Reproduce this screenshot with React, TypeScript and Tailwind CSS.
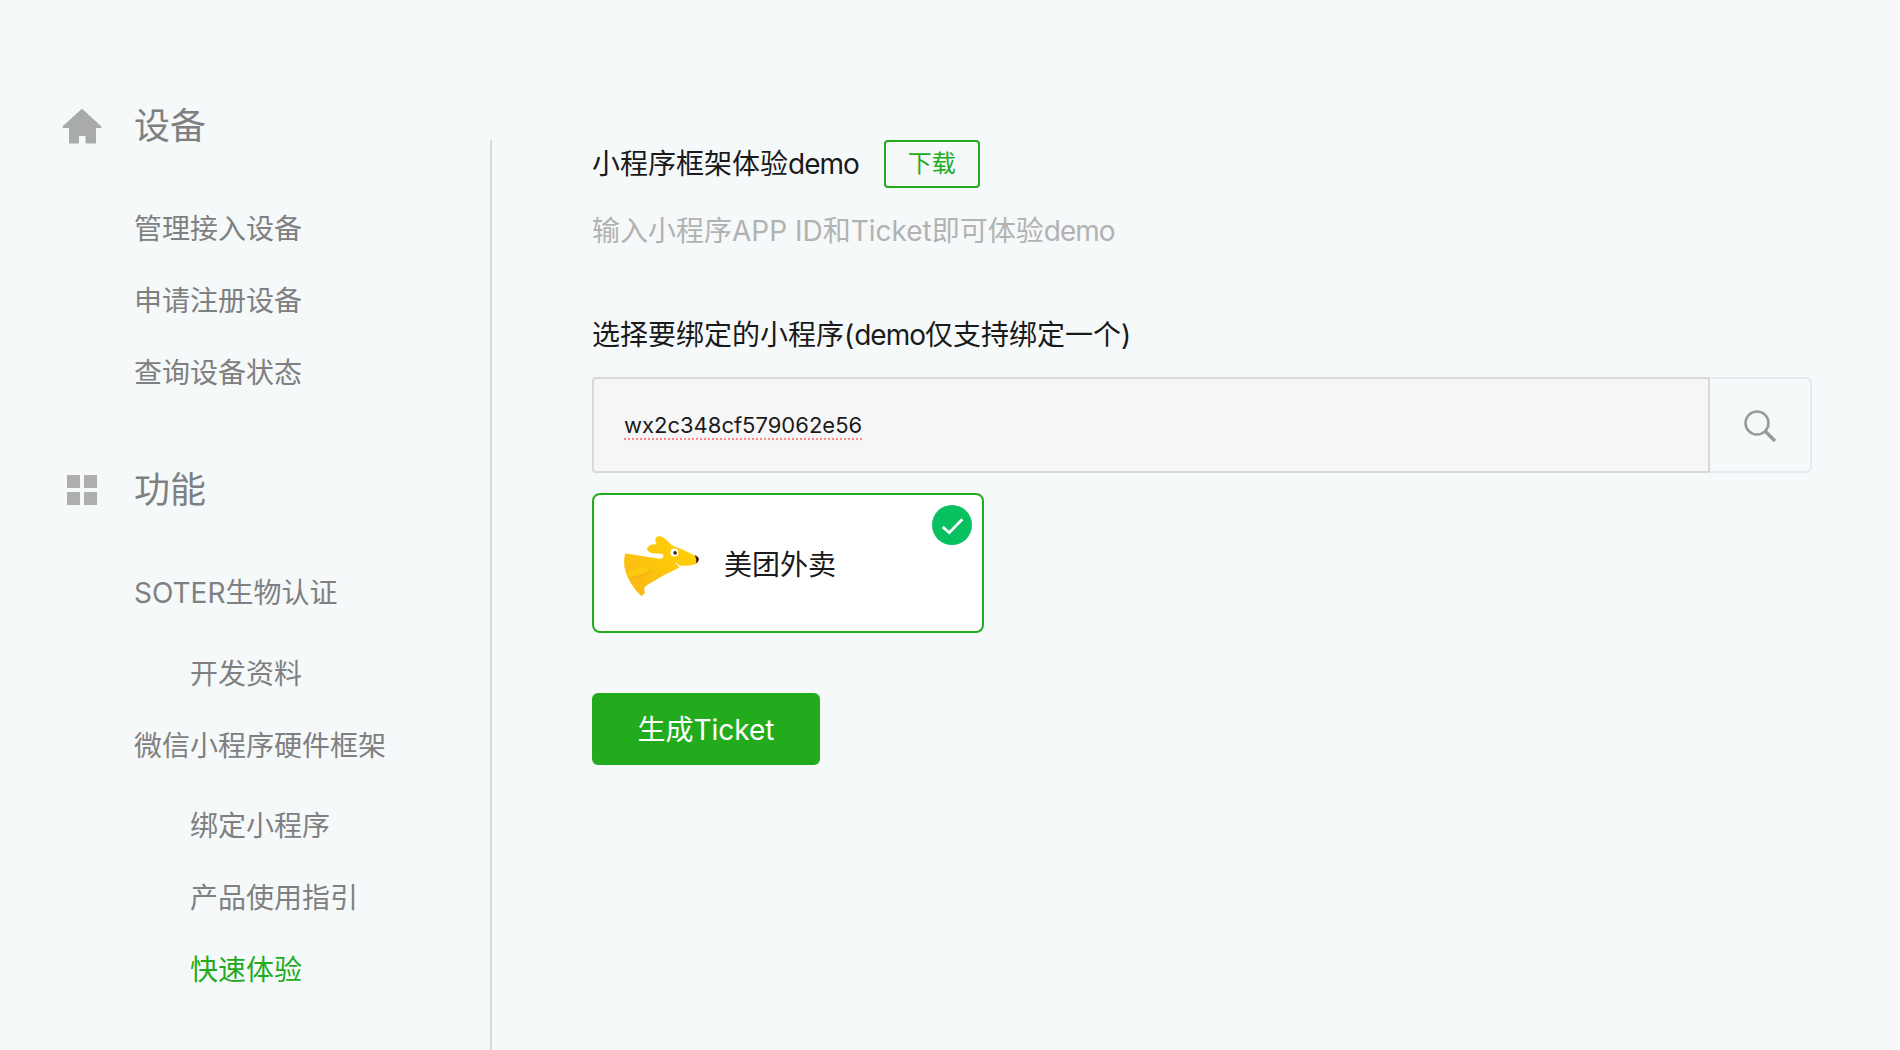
import React from "react";

const fontStack = "font-['Inter','Noto_Sans_CJK_SC',sans-serif]";

function HomeIcon() {
  return (
    <svg width="40" height="36" viewBox="0 0 40 36" className="shrink-0">
      <path
        d="M20 2 L38.5 19 L33 19 L33 34.5 L24.5 34.5 L24.5 27 L16 27 L16 34.5 L8 34.5 L8 19 L1.5 19 Z"
        fill="#a9aaac"
        stroke="#a9aaac"
        strokeWidth="2"
        strokeLinejoin="round"
      />
    </svg>
  );
}

function GridIcon() {
  return (
    <div className="w-[40px] shrink-0 flex justify-center">
      <div className="grid grid-cols-[13px_13px] grid-rows-[13px_13px] gap-[4px]">
        <div className="bg-[#aeaeae]" />
        <div className="bg-[#aeaeae]" />
        <div className="bg-[#aeaeae]" />
        <div className="bg-[#aeaeae]" />
      </div>
    </div>
  );
}

function SearchIcon() {
  return (
    <svg width="36" height="36" viewBox="0 0 36 36" fill="none">
      <circle cx="15" cy="15" r="11.5" stroke="#999999" strokeWidth="2.5" />
      <path d="M23.5 23.5 L33 33" stroke="#999999" strokeWidth="3.5" />
    </svg>
  );
}

function MeituanLogo() {
  return (
    <svg width="77" height="63" viewBox="70 45 230 190" className="shrink-0 mt-[3px]">
      <defs>
        <linearGradient id="dogBody" x1="0" y1="1" x2="1" y2="0">
          <stop offset="0" stopColor="#fbb516" />
          <stop offset="1" stopColor="#ffd502" />
        </linearGradient>
      </defs>
      <path
        d="M75 100 L178 117 Q194 116 190 104 Q180 100 157 100 Q139 96 142 83 Q150 72 170 73 Q160 56 175 48 Q192 48 216 76 Q250 88 285 107 L297 117 Q296 131 285 134 Q262 140 240 137 Q231 132 226 125 Q228 135 240 142 Q190 165 142 196 Q128 205 135 219 L125 230 Q82 190 73 140 Q71 118 75 100 Z"
        fill="url(#dogBody)"
      />
      <path d="M80 157 Q92 146 148 137 Q150 150 130 160 Q105 172 92 172 Q80 170 80 157 Z" fill="#fdc811" />
      <path d="M92 172 Q130 168 165 150 Q135 172 100 178 Z" fill="#f6ae1c" />
      <circle cx="224" cy="98" r="12" fill="#ffffff" />
      <circle cx="226" cy="99" r="5.5" fill="#3a2a1a" />
      <path d="M285 105 Q298 110 298 118 Q296 128 290 130 Q291 116 285 105 Z" fill="#3f2410" />
    </svg>
  );
}

function CheckBadge() {
  return (
    <svg width="40" height="40" viewBox="0 0 40 40" className="absolute top-[10px] right-[10px]">
      <circle cx="20" cy="20" r="20" fill="#07c160" />
      <path d="M10.7 22 L17.3 27.7 L30.3 14.3" fill="none" stroke="#ffffff" strokeWidth="2.8" />
    </svg>
  );
}

function Demo() {
  return <span className="tracking-[-1px]">demo</span>;
}

function NavItem({ label, sub = false, active = false }: { label: string; sub?: boolean; active?: boolean }) {
  return (
    <div
      className={
        "h-[72px] leading-[72px] text-[28px] whitespace-nowrap " +
        (sub ? "pl-[190px] " : "pl-[134px] ") +
        (active ? "text-[#22ac1d]" : "text-[#7f8081]")
      }
    >
      {label}
    </div>
  );
}

function NavHeading({ icon, label }: { icon: React.ReactNode; label: string }) {
  return (
    <div className="flex items-center gap-[32px] pl-[62px] h-[50px]">
      {icon}
      <span className="text-[36px] leading-[50px] text-[#7f8081]">{label}</span>
    </div>
  );
}

export default function App() {
  return (
    <div className={"flex w-[1900px] h-[1050px] overflow-hidden bg-[#f6f9fa] " + fontStack}>
      <nav className="w-[490px] shrink-0 pt-[101px]">
        <NavHeading icon={<HomeIcon />} label="设备" />
        <div className="mt-[42px]">
          <NavItem label="管理接入设备" />
          <NavItem label="申请注册设备" />
          <NavItem label="查询设备状态" />
        </div>
        <div className="mt-[56px]">
          <NavHeading icon={<GridIcon />} label="功能" />
        </div>
        <div className="mt-[42px]">
          <NavItem label="SOTER生物认证" />
          <div className="mt-[9px]">
            <NavItem label="开发资料" sub />
          </div>
          <NavItem label="微信小程序硬件框架" />
          <div className="mt-[8px]">
            <NavItem label="绑定小程序" sub />
            <NavItem label="产品使用指引" sub />
            <NavItem label="快速体验" sub active />
          </div>
        </div>
      </nav>

      <main className="flex-1 mt-[140px] border-l-2 border-[#d8d9da] pl-[100px]">
        <div className="flex items-center gap-[25px]">
          <h2 className="text-[28px] leading-[47px] font-normal text-[#1a1a1a]">
            小程序框架体验
            <Demo />
          </h2>
          <a className="w-[96px] h-[48px] border-2 border-[#22ac1d] rounded-[4px] flex items-center justify-center text-[24px] text-[#22ac1d]">
            下载
          </a>
        </div>
        <p className="mt-[23px] text-[28px] leading-[40px] text-[#b2b2b2]">
          输入小程序APP ID和Ticket即可体验
          <Demo />
        </p>
        <p className="mt-[63px] text-[28px] leading-[42px] text-[#1a1a1a]">
          选择要绑定的小程序(
          <Demo />
          仅支持绑定一个)
        </p>

        <div className="mt-[21px] flex w-[1220px] h-[96px]">
          <div className="w-[1118px] bg-[#f6f6f6] border-2 border-[#d8d8d8] rounded-l-[4px] pl-[30px] pt-[1px] flex items-center text-[22px] text-[#1a1a1a]">
            <span className="underline decoration-dotted decoration-[#f88] underline-offset-[5px]">wx2c348cf579062e56</span>
          </div>
          <div className="flex-1 border-2 border-l-0 border-[#e6e9ed] rounded-r-[6px] pt-[1px] flex items-center justify-center">
            <SearchIcon />
          </div>
        </div>

        <div className="relative mt-[20px] w-[392px] h-[140px] bg-white border-2 border-[#22ac1d] rounded-[8px] flex items-center pl-[29px] pt-[4px] gap-[24px]">
          <MeituanLogo />
          <span className="text-[28px] text-[#1a1a1a]">美团外卖</span>
          <CheckBadge />
        </div>

        <button className="mt-[60px] w-[228px] h-[72px] pt-[1px] bg-[#22ac1d] rounded-[6px] text-white text-[28px]">
          生成Ticket
        </button>
      </main>
    </div>
  );
}
